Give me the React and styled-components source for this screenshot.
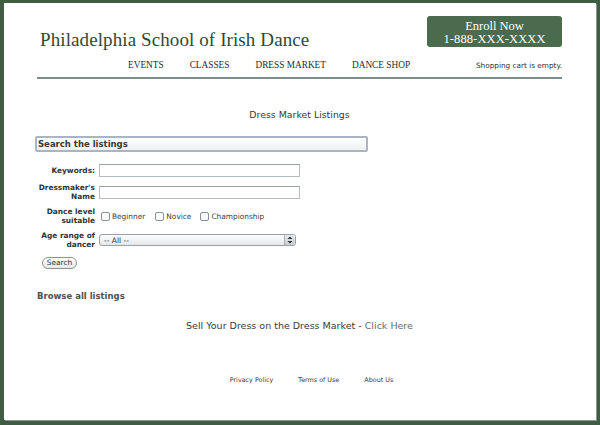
import React from 'react'
import styled, { createGlobalStyle } from 'styled-components'

const Global = createGlobalStyle`
  html, body {
    margin: 0;
    padding: 0;
    background: #3e5d43;
  }
  body {
    height: 425px;
    overflow: hidden;
  }
`

const Card = styled.div`
  margin: 3px 4px 0 4px;
  width: 592px;
  height: 417px;
  box-sizing: border-box;
  background: #fff;
  box-shadow: 1px 1px 0 #8a9a8e;
  padding: 13px 34px 0 33px;
  display: flex;
  flex-direction: column;
  font-family: 'DejaVu Sans', Verdana, sans-serif;
  color: #3a4040;
`

const TopRow = styled.div`
  display: flex;
  justify-content: space-between;
  align-items: flex-start;
`

const Title = styled.h1`
  margin: 12px 0 0 3px;
  font-family: 'Liberation Serif', 'DejaVu Serif', serif;
  font-weight: normal;
  font-size: 19px;
  line-height: 24px;
  color: #2f4a36;
  letter-spacing: 0.1px;
`

const Enroll = styled.a`
  width: 135px;
  height: 31px;
  box-sizing: border-box;
  background: #4a6b4d;
  border-radius: 3px;
  color: #fff;
  font-family: 'Liberation Serif', 'DejaVu Serif', serif;
  display: flex;
  flex-direction: column;
  align-items: center;
  justify-content: center;
  padding-top: 2px;
  text-decoration: none;
`

const EnrollLine = styled.span`
  font-size: 12.5px;
  line-height: 13px;
  letter-spacing: ${p => (p.$big ? '0.1px' : '0')};
`

const NavRow = styled.div`
  display: flex;
  align-items: center;
  padding: 0 0 7px 91px;
  margin-top: 8px;
  border-bottom: 2px solid #7e8c8d;
`

const NavLink = styled.a`
  font-family: 'Liberation Serif', 'DejaVu Serif', serif;
  font-size: 9.3px;
  color: #232f2c;
  margin-right: 26px;
  text-decoration: none;
`

const Cart = styled.span`
  margin-left: auto;
  font-size: 7.3px;
  color: #2c3436;
`

const PageHeading = styled.h2`
  margin: 30px 0 0;
  text-align: center;
  font-weight: normal;
  font-size: 9.4px;
  color: #333b3b;
`

const SearchBar = styled.div`
  margin: 16px 0 0 -2px;
  width: 333px;
  height: 16px;
  box-sizing: border-box;
  border: 2px solid #a7b6c2;
  border-radius: 2px;
  background: linear-gradient(#ffffff, #eef0f2);
  font-weight: bold;
  font-size: 8.5px;
  line-height: 12px;
  padding-left: 1px;
  color: #343a3c;
`

const Form = styled.div`
  display: grid;
  grid-template-columns: 58px auto;
  column-gap: 4px;
  row-gap: 6px;
  margin-top: 12px;
  align-items: center;
`

const Label = styled.label`
  text-align: right;
  font-weight: bold;
  font-size: 7.4px;
  line-height: 9px;
  color: #2e3434;
`

const TextInput = styled.div`
  width: 201px;
  height: 13px;
  box-sizing: border-box;
  border: 1px solid #b5bcc0;
  border-top-color: #9aa0a4;
  background: #fff;
`

const Checks = styled.div`
  display: flex;
  align-items: center;
  font-size: 7.4px;
  color: #3a4040;
`

const CheckItem = styled.span`
  display: flex;
  align-items: center;
  margin-right: ${p => p.$gap}px;
`

const Box = styled.span`
  width: 7px;
  height: 7px;
  border: 1px solid #8b9294;
  border-radius: 2px;
  margin: 0 2px 0 2px;
  background: #fafafa;
`

const Select = styled.div`
  width: 197px;
  height: 12px;
  box-sizing: border-box;
  border: 1px solid #9aa1a6;
  border-radius: 3px;
  background: linear-gradient(#fdfdfd, #e4e7ea);
  display: flex;
  align-items: center;
  font-size: 7.5px;
  padding-left: 4px;
  color: #333;
`

const Stepper = styled.span`
  margin-left: auto;
  width: 10px;
  height: 10px;
  border-left: 1px solid #a8afb3;
  background: linear-gradient(#e8ebee, #c8cdd1);
  display: flex;
  align-items: center;
  justify-content: center;
  border-radius: 0 2px 2px 0;
`

const SearchButton = styled.button`
  margin: 8px 0 0 5px;
  align-self: flex-start;
  width: 35px;
  height: 12px;
  padding: 0;
  border: 1px solid #8c9396;
  border-radius: 6px;
  background: linear-gradient(#ffffff, #e6e8ea);
  font-family: 'DejaVu Sans', Verdana, sans-serif;
  font-size: 7.4px;
  line-height: 10px;
  color: #2e3434;
`

const Browse = styled.a`
  margin-top: 22px;
  font-weight: bold;
  font-size: 8.5px;
  color: #4a5252;
  text-decoration: none;
`

const Sell = styled.p`
  margin: 19px 0 0;
  text-align: center;
  font-size: 9.5px;
  color: #353c3c;
`

const SellLink = styled.a`
  color: #5f6e70;
  text-decoration: none;
`

const Footer = styled.div`
  display: flex;
  justify-content: center;
  gap: 25px;
  margin-top: 45px;
  padding-left: 24px;
  font-size: 6.4px;
  color: #353c3c;
`

const FooterLink = styled.a`
  text-decoration: none;
  color: inherit;
`

const SearchForm = () => (
  <Form>
    <Label>Keywords:</Label>
    <TextInput />
    <Label>
      Dressmaker's
      <br />
      Name
    </Label>
    <TextInput />
    <Label>
      Dance level
      <br />
      suitable
    </Label>
    <Checks>
      <CheckItem $gap={8}>
        <Box />
        Beginner
      </CheckItem>
      <CheckItem $gap={7}>
        <Box />
        Novice
      </CheckItem>
      <CheckItem $gap={0}>
        <Box />
        Championship
      </CheckItem>
    </Checks>
    <Label>
      Age range of
      <br />
      dancer
    </Label>
    <Select>
      -- All --
      <Stepper>
        <svg width="6" height="8" viewBox="0 0 6 8">
          <path d="M3 0.5 L5.5 3 H0.5 Z M3 7.5 L5.5 5 H0.5 Z" fill="#333" />
        </svg>
      </Stepper>
    </Select>
  </Form>
)

export default function App() {
  return (
    <>
      <Global />
      <Card>
        <TopRow>
          <Title>Philadelphia School of Irish Dance</Title>
          <Enroll>
            <EnrollLine>Enroll Now</EnrollLine>
            <EnrollLine $big>1-888-XXX-XXXX</EnrollLine>
          </Enroll>
        </TopRow>
        <NavRow>
          <NavLink>EVENTS</NavLink>
          <NavLink>CLASSES</NavLink>
          <NavLink>DRESS MARKET</NavLink>
          <NavLink>DANCE SHOP</NavLink>
          <Cart>Shopping cart is empty.</Cart>
        </NavRow>
        <PageHeading>Dress Market Listings</PageHeading>
        <SearchBar>Search the listings</SearchBar>
        <SearchForm />
        <SearchButton>Search</SearchButton>
        <Browse>Browse all listings</Browse>
        <Sell>
          Sell Your Dress on the Dress Market - <SellLink>Click Here</SellLink>
        </Sell>
        <Footer>
          <FooterLink>Privacy Policy</FooterLink>
          <FooterLink>Terms of Use</FooterLink>
          <FooterLink>About Us</FooterLink>
        </Footer>
      </Card>
    </>
  )
}
